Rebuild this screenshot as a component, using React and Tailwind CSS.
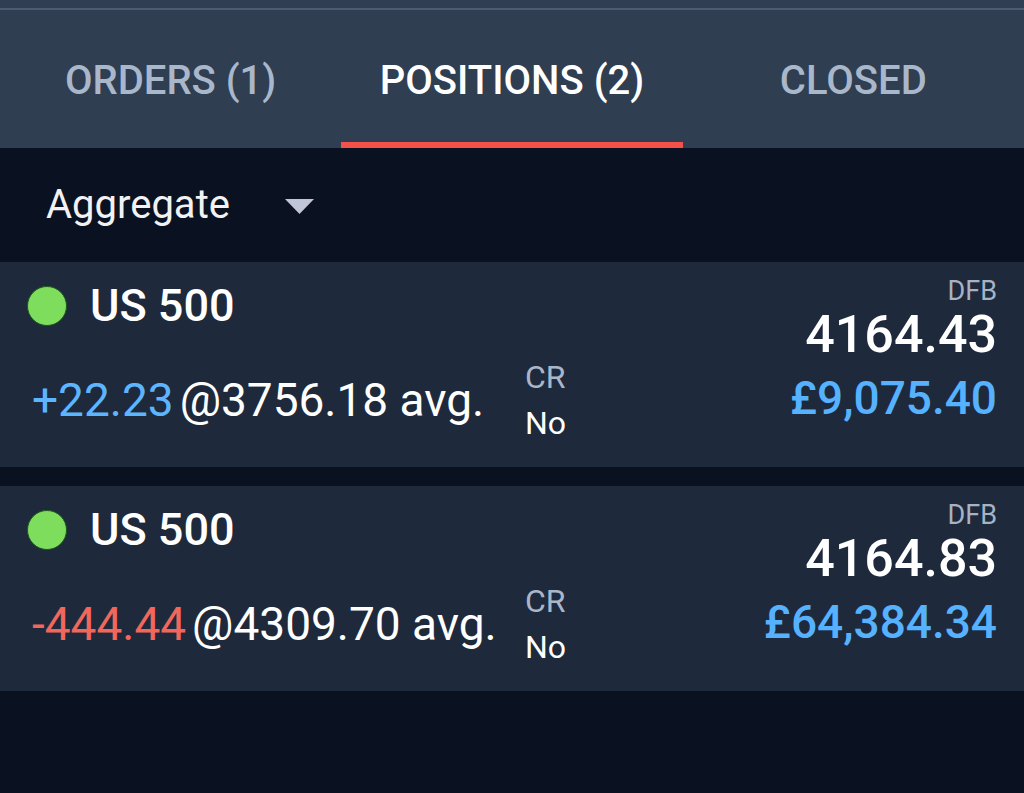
import React from "react";

function Card({ qty, qtyColor, avg, price, pnl }) {
  return (
    <div className="flex h-[205px] justify-between bg-[#1e2a3c]">
      <div className="flex flex-col pl-[27px] pt-[18px]">
        <div className="flex h-[52px] items-center">
          <span className="h-[40px] w-[40px] rounded-full border border-[#1c5a1c] bg-[#7fdd5d]" />
          <span className="ml-[23px] text-[45px] font-medium leading-[52px] text-white">US 500</span>
        </div>
        <div className="mt-[22px] flex items-center">
          <div className="ml-[5px] w-[493px] whitespace-nowrap text-[46px] leading-[52px]">
            <span className={qtyColor}>{qty}</span>
            <span className="ml-[6px] text-white">@{avg} avg.</span>
          </div>
          <div className="flex flex-col text-[32px] leading-[46px]">
            <span className="text-[#a9b6ca]">CR</span>
            <span className="text-white">No</span>
          </div>
        </div>
      </div>
      <div className="flex flex-col items-end pr-[27px] pt-[14px] text-right">
        <span className="text-[27px] leading-[30px] text-[#a7b2c4]">DFB</span>
        <span className="mt-[1px] text-[52px] font-medium leading-[56px] text-white">{price}</span>
        <span className="mt-[7px] text-[46px] font-medium leading-[56px] text-[#56b2ff]">{pnl}</span>
      </div>
    </div>
  );
}

export default function App() {
  return (
    <div
      className="flex h-[793px] w-[1024px] flex-col overflow-hidden bg-[#0a1120]"
      style={{ fontFamily: "Roboto, 'Noto Sans', sans-serif" }}
    >
      <div className="flex h-[148px] flex-col bg-[#2f3e51]">
        <div className="h-[8px] shrink-0" />
        <div className="h-[2px] shrink-0 bg-[#4b5b71]" />
        <div className="flex flex-1">
          <div className="flex flex-1 justify-center border-b-[6px] border-transparent pt-[47px]">
            <span className="text-[40px] font-medium leading-[48px] text-[#a9b7cb]">ORDERS (1)</span>
          </div>
          <div className="flex flex-1 justify-center border-b-[6px] border-[#f3514a] pt-[47px]">
            <span className="text-[40px] font-medium leading-[48px] text-white">POSITIONS (2)</span>
          </div>
          <div className="flex flex-1 justify-center border-b-[6px] border-transparent pt-[47px]">
            <span className="text-[40px] font-medium leading-[48px] text-[#a9b7cb]">CLOSED</span>
          </div>
        </div>
      </div>
      <div className="flex h-[114px] items-center pl-[46px]">
        <span className="text-[40px] leading-[46px] text-[#f2f2f4]">Aggregate</span>
        <svg className="ml-[55px] mt-[2px]" width="29" height="15" viewBox="0 0 29 15">
          <polygon points="0,0 29,0 14.5,15" fill="#c2c4d8" />
        </svg>
      </div>
      <Card qty="+22.23" qtyColor="text-[#5db5ff]" avg="3756.18" price="4164.43" pnl="£9,075.40" />
      <div className="h-[19px]" />
      <Card qty="-444.44" qtyColor="text-[#f2675c]" avg="4309.70" price="4164.83" pnl="£64,384.34" />
    </div>
  );
}
